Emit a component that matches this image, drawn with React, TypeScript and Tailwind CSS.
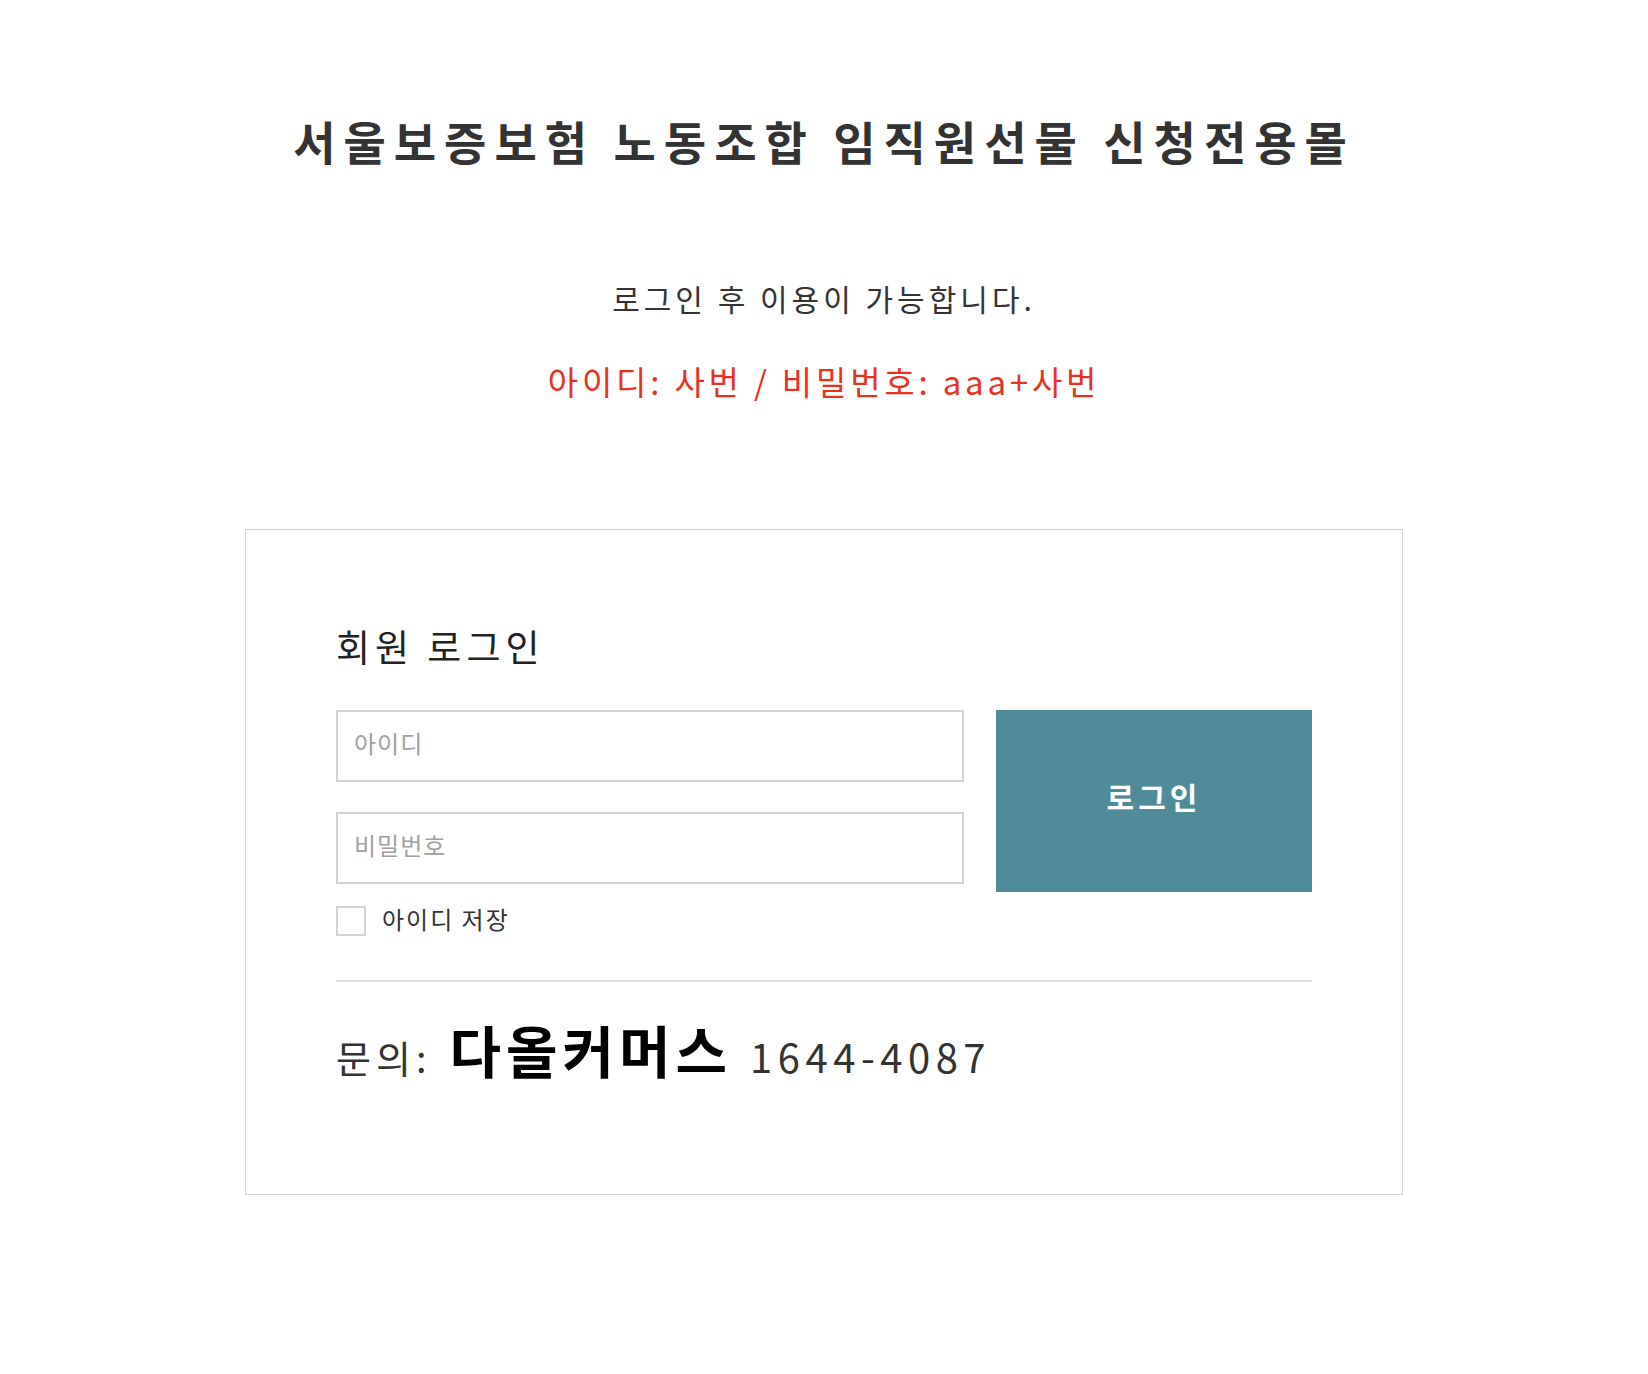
import React from "react";

export default function App() {
  return (
    <div className="min-h-[1374px] w-full bg-white font-['Noto_Sans_CJK_KR','Noto_Sans',sans-serif] text-[#333]">
      <div className="flex flex-col items-center pt-[110px]">
        <h1 className="text-[46px] leading-[60px] font-semibold tracking-[8px] text-[#333]">
          서울보증보험 노동조합 임직원선물 신청전용몰
        </h1>
        <p className="mt-[108px] text-[30px] leading-[40px] tracking-[4px] text-[#333]">로그인 후 이용이 가능합니다.</p>
        <p className="mt-[41px] text-[33px] leading-[44px] tracking-[3.8px] text-[#e8321f]">아이디: 사번 / 비밀번호: aaa+사번</p>

        <div className="mt-[126px] w-[1158px] border border-[#d6d6d6] px-[90px] pt-[94px] pb-[103px]">
          <h2 className="text-[37px] leading-[44px] tracking-[5px] text-[#222]">회원 로그인</h2>
          <div className="mt-[42px] flex gap-[32px]">
            <div className="flex w-[628px] flex-col">
              <input
                type="text"
                placeholder="아이디"
                className="h-[72px] w-full border-2 border-[#d3d3d3] px-[16px] pb-[8px] text-[24px] tracking-[1px] outline-none placeholder:text-[#a0a0a0]"
              />
              <input
                type="password"
                placeholder="비밀번호"
                className="mt-[30px] h-[72px] w-full border-2 border-[#d3d3d3] px-[16px] pb-[8px] text-[24px] tracking-[1px] outline-none placeholder:text-[#a0a0a0]"
              />
              <label className="mt-[20px] flex items-center gap-[16px]">
                <span className="block h-[30px] w-[30px] border-2 border-[#d3d3d3] bg-white" />
                <span className="pb-[3px] text-[24px] leading-[30px] tracking-[2px] text-[#333]">아이디 저장</span>
              </label>
            </div>
            <button className="flex h-[182px] w-[316px] items-center justify-center bg-[#508b9a] pb-[10px] text-[30px] font-semibold tracking-[4px] text-white">
              로그인
            </button>
          </div>
          <div className="mt-[43px] h-[2px] w-full bg-[#dcdcdc]" />
          <div className="mt-[25px] flex items-baseline">
            <span className="text-[38px] text-[#333] tracking-[5px]">문의:</span>
            <span className="ml-[18px] text-[56px] font-semibold text-black tracking-[5px]">다올커머스</span>
            <span className="ml-[18px] text-[40px] text-[#333] tracking-[5.5px]">1644-4087</span>
          </div>
        </div>
      </div>
    </div>
  );
}
